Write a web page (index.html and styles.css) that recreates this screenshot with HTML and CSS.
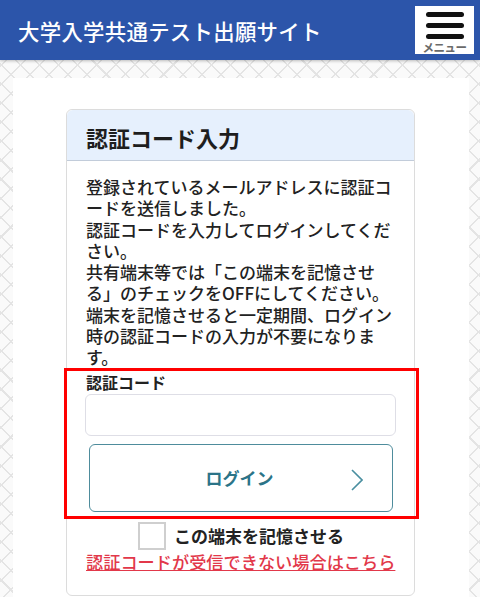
FILE: index.html
```html
<!DOCTYPE html>
<html lang="ja">
	<head>
		<meta charset="utf-8">
		<meta name="viewport" content="width=device-width, initial-scale=1">
		<title>認証コード入力</title>
		<link rel="stylesheet" href="styles.css">
	</head>
	<body>
		<div class="header">
			<div class="site-title">大学入学共通テスト出願サイト</div>
			<div class="menu-btn">
				<span class="bar"></span>
				<span class="bar"></span>
				<span class="bar"></span>
				<span class="menu-label">メニュー</span>
			</div>
		</div>
		<div class="bg">
			<div class="panel">
				<div class="card">
					<div class="card-head">認証コード入力</div>
					<div class="card-body">
						<p class="msg">登録されているメールアドレスに認証コードを送信しました。<br>認証コードを入力してログインしてください。<br>共有端末等では「この端末を記憶させる」のチェックをOFFにしてください。<br>端末を記憶させると一定期間、ログイン時の認証コードの入力が不要になります。</p>
						<div class="mark">
							<label class="code-label" for="code">認証コード</label>
							<input class="code-input" id="code" type="text">
							<button class="login-btn" type="button">
								<span>ログイン</span>
								<svg class="chev" width="12" height="22" viewBox="0 0 12 22"><path d="M1 1 L11 11 L1 21" fill="none" stroke="#4a8fa0" stroke-width="1.6"/></svg>
							</button>
						</div>
						<div class="remember">
							<span class="check"></span>
							<span class="remember-text">この端末を記憶させる</span>
						</div>
						<a class="help-link" href="#">認証コードが受信できない場合はこちら</a>
					</div>
				</div>
			</div>
		</div>
	</body>
</html>
```

FILE: styles.css
```css
body {
	margin: 0;
	font-family: "Noto Sans CJK JP", "Noto Sans", sans-serif;
	color: #222;
	background: #fff;
	overflow: hidden;
}

.header {
	height: 60px;
	background-color: #2c55aa;
	display: flex;
	align-items: center;
	justify-content: space-between;
	box-shadow: 0 1px 3px rgba(0, 0, 0, 0.25);
	position: relative;
	z-index: 1;
}

.site-title {
	color: #fff;
	font-size: 21.4px;
	font-weight: 500;
	padding-left: 18px;
	letter-spacing: 0.3px;
}

.menu-btn {
	width: 59px;
	height: 48px;
	margin-right: 6px;
	background: #fff;
	display: flex;
	flex-direction: column;
	align-items: center;
	padding-top: 6px;
	box-sizing: border-box;
}

.bar {
	width: 38px;
	height: 5px;
	border-radius: 3px;
	background: #111;
	margin-bottom: 6px;
}

.menu-label {
	font-size: 11.5px;
	font-weight: bold;
	color: #6a6a6a;
	line-height: 11px;
	margin-top: -3px;
	letter-spacing: -0.5px;
}

.bg {
	height: 537px;
	box-sizing: border-box;
	padding: 18px 11px 0 13px;
	background-color: #fafafa;
	background-image:
		repeating-linear-gradient(45deg, transparent 0 12px, #e4e4e4 12px 13.5px),
		repeating-linear-gradient(-45deg, transparent 0 12px, #e4e4e4 12px 13.5px);
}

.panel {
	background: #fff;
	height: 100%;
	box-sizing: border-box;
	padding: 31px 54px 0 53px;
}

.card {
	border: 1px solid #dcdcdc;
	border-radius: 6px;
	height: 487px;
	box-sizing: border-box;
}

.card-head {
	background: #e6f0fd;
	border-bottom: 1.5px solid #c2ccda;
	border-radius: 6px 6px 0 0;
	font-size: 22px;
	font-weight: bold;
	padding: 11px 19px 0;
	height: 39px;
	color: #1e1e1e;
}

.card-body {
	padding: 15px 18px 0 19px;
}

.msg {
	margin: 0;
	font-size: 17px;
	line-height: 21.3px;
	font-weight: 500;
	width: 312px;
}

.mark {
	border: 3px solid #f00;
	margin: 0 -23px 0 -22px;
	padding: 1px 20px 1px 18px;
	height: 143px;
}

.code-label {
	display: block;
	font-size: 16px;
	font-weight: bold;
	line-height: 21px;
	margin-left: 1px;
}

.code-input {
	display: block;
	width: 311px;
	height: 42px;
	box-sizing: border-box;
	border: 1px solid #dedee6;
	border-radius: 6px;
	margin: 1px 0 0;
}

.login-btn {
	display: flex;
	align-items: center;
	width: 304px;
	height: 68px;
	margin: 8px 0 0 4px;
	background: #fff;
	border: 1.5px solid #4e8c9c;
	border-radius: 6px;
	font-family: inherit;
	font-size: 17px;
	font-weight: bold;
	color: #2b7488;
	padding: 0 29px 0 0;
}

.login-btn span {
	flex: 1;
	text-align: center;
	padding-left: 38px;
}

.chev {
	margin-top: 5px;
}

.remember {
	display: flex;
	align-items: center;
	justify-content: center;
	margin-top: 3px;
}

.check {
	width: 24px;
	height: 24px;
	border: 2px solid #cfcfcf;
	margin-right: 8px;
}

.remember-text {
	font-size: 17px;
	font-weight: bold;
}

.help-link {
	display: block;
	color: #e2384a;
	font-size: 17.2px;
	line-height: 22px;
	font-weight: 500;
	text-decoration: underline;
	margin-top: 1px;
}
```
